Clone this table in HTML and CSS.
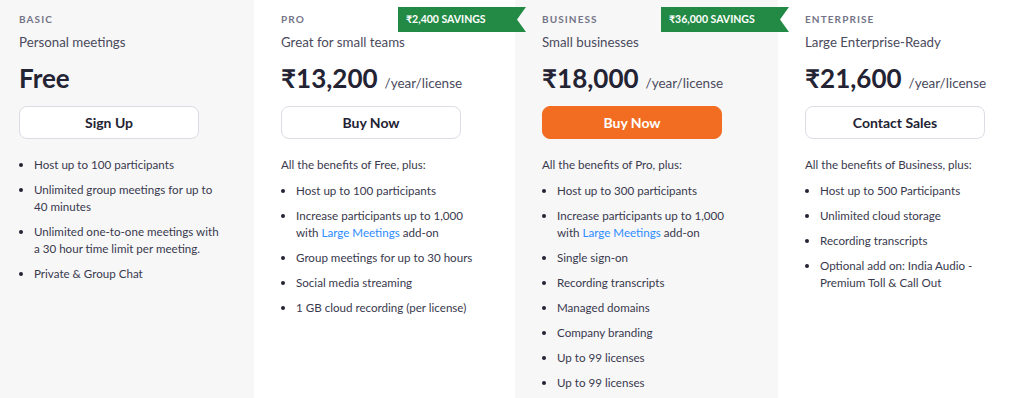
FILE: index.html
```html
<!DOCTYPE html>
<html>
<head>
    <meta charset="UTF-8" />
    <meta name="viewport" content="width=device-width, initial-scale=1.0">
    <title>Plans &amp; Pricing</title>
    <link rel="stylesheet" href="styles.css">
</head>

<body>
    <div class="plans">
        <div class="plan plan-basic shaded">
            <div class="plan-label">BASIC</div>
            <div class="plan-name">Personal meetings</div>
            <div class="plan-price">Free</div>
            <button class="plan-button">Sign Up</button>
            <ul class="plan-features">
                <li>Host up to 100 participants</li>
                <li>Unlimited group meetings for up to 40 minutes</li>
                <li>Unlimited one-to-one meetings with a 30 hour time limit per meeting.</li>
                <li>Private &amp; Group Chat</li>
            </ul>
        </div>

        <div class="plan">
            <div class="savings">₹2,400 SAVINGS</div>
            <div class="plan-label">PRO</div>
            <div class="plan-name">Great for small teams</div>
            <div class="plan-price">₹13,200<span class="per">/year/license</span></div>
            <button class="plan-button">Buy Now</button>
            <div class="plan-intro">All the benefits of Free, plus:</div>
            <ul class="plan-features">
                <li>Host up to 100 participants</li>
                <li>Increase participants up to 1,000 with <a href="#">Large Meetings</a> add-on</li>
                <li>Group meetings for up to 30 hours</li>
                <li>Social media streaming</li>
                <li>1 GB cloud recording (per license)</li>
            </ul>
        </div>

        <div class="plan shaded">
            <div class="savings">₹36,000 SAVINGS</div>
            <div class="plan-label">BUSINESS</div>
            <div class="plan-name">Small businesses</div>
            <div class="plan-price">₹18,000<span class="per">/year/license</span></div>
            <button class="plan-button primary">Buy Now</button>
            <div class="plan-intro">All the benefits of Pro, plus:</div>
            <ul class="plan-features">
                <li>Host up to 300 participants</li>
                <li>Increase participants up to 1,000 with <a href="#">Large Meetings</a> add-on</li>
                <li>Single sign-on</li>
                <li>Recording transcripts</li>
                <li>Managed domains</li>
                <li>Company branding</li>
                <li>Up to 99 licenses</li>
                <li>Up to 99 licenses</li>
            </ul>
        </div>

        <div class="plan">
            <div class="plan-label">ENTERPRISE</div>
            <div class="plan-name">Large Enterprise-Ready</div>
            <div class="plan-price">₹21,600<span class="per">/year/license</span></div>
            <button class="plan-button">Contact Sales</button>
            <div class="plan-intro">All the benefits of Business, plus:</div>
            <ul class="plan-features">
                <li>Host up to 500 Participants</li>
                <li>Unlimited cloud storage</li>
                <li>Recording transcripts</li>
                <li>Optional add on: India Audio - Premium Toll &amp; Call Out</li>
            </ul>
        </div>
    </div>
</body>
</html>
```

FILE: styles.css
```css
* {
    margin: 0;
    padding: 0;
    box-sizing: border-box;
    font-family: "Lato", "Noto Sans", sans-serif;
}

body {
    background-color: #fff;
    color: #39394d;
    height: 398px;
    overflow: hidden;
}

.plans {
    display: grid;
    grid-template-columns: 254px 261px 263px 1fr;
    height: 398px;
}

.plan {
    position: relative;
    padding: 13px 20px 0 27px;
}

.plan.shaded {
    background-color: #f7f7f8;
}

.plan-basic {
    padding-left: 19px;
}

.plan-label {
    font-size: 10px;
    line-height: 12px;
    font-weight: 700;
    letter-spacing: 1.1px;
    color: #747487;
}

.plan-name {
    margin-top: 8px;
    font-size: 13.3px;
    line-height: 18px;
    color: #4a4a5c;
}

.plan-price {
    margin-top: 10px;
    height: 34px;
    font-size: 26px;
    line-height: 34px;
    font-weight: 700;
    color: #232333;
    white-space: nowrap;
}

.plan-price .per {
    font-size: 13.5px;
    font-weight: 400;
    color: #4a4a5c;
    margin-left: 7px;
}

.plan-button {
    display: block;
    margin-top: 11px;
    width: 180px;
    height: 33px;
    border: 1px solid #dcdce4;
    border-radius: 8px;
    background-color: #fff;
    color: #232333;
    font-size: 14px;
    font-weight: 700;
    cursor: pointer;
}

.plan-button.primary {
    background-color: #f26d21;
    border-color: #f26d21;
    color: #fff;
}

.plan-intro {
    margin-top: 17px;
    font-size: 11.6px;
    line-height: 17px;
    color: #39394d;
}

.plan-features {
    list-style: disc outside;
    width: 202px;
    padding-left: 15px;
    margin-top: 17px;
}

.plan-intro + .plan-features {
    margin-top: 9px;
}

.plan-features li {
    margin-bottom: 8px;
    font-size: 11.6px;
    line-height: 17px;
}

.plan-features li::marker {
    color: #232333;
    font-size: 13px;
}

.plan-features li a {
    color: #2d8cff;
    text-decoration: none;
}

.savings {
    position: absolute;
    z-index: 2;
    top: 7px;
    right: -11px;
    width: 128px;
    height: 25px;
    padding-left: 8px;
    background-color: #238a45;
    color: #fff;
    font-size: 10.5px;
    line-height: 25px;
    font-weight: 700;
    clip-path: polygon(0 0, 100% 0, calc(100% - 9px) 50%, 100% 100%, 0 100%);
}
```
